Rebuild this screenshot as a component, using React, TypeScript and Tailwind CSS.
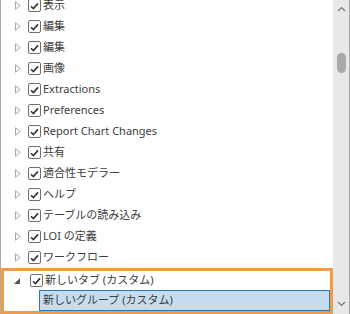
const rows = [
  "表示",
  "編集",
  "編集",
  "画像",
  "Extractions",
  "Preferences",
  "Report Chart Changes",
  "共有",
  "適合性モデラー",
  "ヘルプ",
  "テーブルの読み込み",
  "LOI の定義",
  "ワークフロー",
];

function Check() {
  return (
    <span className="flex h-[13px] w-[13px] shrink-0 items-center justify-center rounded-[2px] border border-[#6f6f6f] bg-white">
      <svg width="9" height="8" viewBox="0 0 9 8">
        <path d="M1 4.2 L3.4 6.6 L8 1.4" fill="none" stroke="#333" strokeWidth="1.6" />
      </svg>
    </span>
  );
}

function Closed() {
  return (
    <svg width="6" height="9" viewBox="0 0 6 9" className="shrink-0">
      <path d="M0.5 0.8 L5.2 4.5 L0.5 8.2 Z" fill="white" stroke="#a6a6a6" strokeWidth="1" />
    </svg>
  );
}

function Row({ label }: { label: string }) {
  return (
    <div className="flex h-[21px] items-center pl-[14px]">
      <Closed />
      <span className="ml-[7px]">
        <Check />
      </span>
      <span className="ml-[2px] whitespace-nowrap">{label}</span>
    </div>
  );
}

export default function App() {
  return (
    <div
      className="flex h-[314px] w-[350px] overflow-hidden border-l border-r border-[#ababab] bg-white text-[11px] text-[#3c3c3c]"
      style={{ fontFamily: '"Noto Sans", "Noto Sans CJK JP", sans-serif' }}
    >
      <div className="flex min-w-0 flex-1 flex-col">
        <div className="mt-[-5px]">
          {rows.map((r, i) => (
            <Row key={i} label={r} />
          ))}
        </div>
        <div className="border-[3px] border-[#f29a48]">
          <div className="flex h-[19px] items-center pl-[10px]">
            <svg width="6" height="6" viewBox="0 0 6 6" className="shrink-0">
              <path d="M6 0 L6 6 L0 6 Z" fill="#555" />
            </svg>
            <span className="ml-[10px]">
              <Check />
            </span>
            <span className="ml-[2px] whitespace-nowrap">新しいタブ (カスタム)</span>
          </div>
          <div className="ml-[35px] flex h-[21px] items-center border border-[#2a78b5] bg-[#c6dcf0] pl-[3px]">
            <span className="whitespace-nowrap">新しいグループ (カスタム)</span>
          </div>
        </div>
      </div>
      <div className="flex w-[16px] shrink-0 flex-col items-center bg-[#e8e8e8]">
        <svg width="9" height="6" viewBox="0 0 9 6" className="mt-[6px]">
          <path d="M1 5 L4.5 1.5 L8 5" fill="none" stroke="#777" strokeWidth="1.2" />
        </svg>
        <div className="mt-[41px] h-[20px] w-[9px] rounded-full bg-[#a9a9a9]" />
        <div className="flex-1" />
        <svg width="9" height="6" viewBox="0 0 9 6" className="mb-[7px]">
          <path d="M1 1 L4.5 4.5 L8 1" fill="none" stroke="#777" strokeWidth="1.2" />
        </svg>
      </div>
    </div>
  );
}
